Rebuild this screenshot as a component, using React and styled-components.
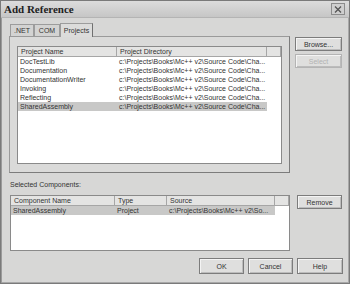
import React from "react"
import styled, { createGlobalStyle } from "styled-components"

const GlobalStyle = createGlobalStyle`
  html, body {
    margin: 0;
    padding: 0;
    background: #d6d6d6;
  }
  body {
    font-family: "Liberation Sans", Arial, sans-serif;
    -webkit-font-smoothing: antialiased;
  }
`

const Window = styled.div`
  width: 350px;
  height: 284px;
  box-sizing: border-box;
  background: #d7d7d6;
  border: 1px solid #7a7a7a;
  box-shadow: inset 1px 0 0 #9a9a9a, inset -1px -1px 0 #a8a8a8;
  display: flex;
  flex-direction: column;
  font-size: 7px;
  color: #333333;
`

const TitleBar = styled.div`
  height: 16px;
  display: flex;
  align-items: center;
  justify-content: space-between;
  padding: 0 4px 0 3px;
  background: linear-gradient(#dcdcdc, #c6c6c6);
  border-bottom: 1px solid #b4b4b4;
`

const Title = styled.span`
  font-family: "Liberation Serif", "Times New Roman", serif;
  font-weight: bold;
  font-size: 11px;
  color: #1e1e1e;
`

const CloseBox = styled.div`
  width: 12px;
  height: 10px;
  border: 1px solid #8c8c8c;
  background: #cfcfcf;
  display: flex;
  align-items: center;
  justify-content: center;
`

const Body = styled.div`
  flex: 1;
  display: flex;
  flex-direction: column;
  padding: 5px 6px 0 8px;
`

const TopRow = styled.div`
  display: flex;
  gap: 5px;
`

const TabArea = styled.div`
  width: 281px;
  display: flex;
  flex-direction: column;
`

const Tabs = styled.div`
  height: 13px;
  display: flex;
  align-items: flex-end;
  padding-left: 1px;
`

const Tab = styled.div`
  width: ${p => p.$w}px;
  height: ${p => (p.$active ? 14 : 12)}px;
  box-sizing: border-box;
  margin-bottom: ${p => (p.$active ? -1 : 0)}px;
  border: 1px solid #9c9c9c;
  border-bottom: none;
  border-right-color: ${p => (p.$active ? "#707070" : "#9c9c9c")};
  background: ${p => (p.$active ? "#dcdcdb" : "#d3d3d2")};
  display: flex;
  align-items: center;
  justify-content: center;
  z-index: ${p => (p.$active ? 1 : 0)};
`

const Panel = styled.div`
  height: 137px;
  box-sizing: border-box;
  border: 1px solid #9a9a9a;
  border-right-color: #7c7c7c;
  border-bottom-color: #7c7c7c;
  background: #dadad9;
  padding: 9px 7px 8px 7px;
  display: flex;
`

const SideButtons = styled.div`
  display: flex;
  flex-direction: column;
  gap: 3px;
  padding-top: 14px;
`

const Button = styled.button`
  width: ${p => p.$w}px;
  height: ${p => p.$h}px;
  box-sizing: border-box;
  padding: 0;
  font-family: "Liberation Sans", Arial, sans-serif;
  font-size: 7px;
  color: ${p => (p.disabled ? "#b2b2b2" : "#333333")};
  background: #dfdfde;
  border: 1px solid ${p => (p.disabled ? "#b4b4b4" : "#7c7c7c")};
  box-shadow: inset 1px 1px 0 #f4f4f4, inset -1px -1px 0 #bcbcbc;
`

const List = styled.div`
  width: ${p => (p.$w ? `${p.$w}px` : "auto")};
  flex: ${p => (p.$w ? "none" : 1)};
  height: ${p => (p.$h ? `${p.$h}px` : "auto")};
  box-sizing: border-box;
  border: 1px solid #8a8a8a;
  background: #ffffff;
  display: flex;
  flex-direction: column;
  overflow: hidden;
`

const HeaderRow = styled.div`
  display: flex;
  height: 10px;
`

const HeaderCell = styled.div`
  width: ${p => (p.$w ? `${p.$w}px` : "auto")};
  flex: ${p => (p.$w ? "none" : 1)};
  box-sizing: border-box;
  background: #e4e4e3;
  border-right: 1px solid #a6a6a6;
  border-bottom: 1px solid #a6a6a6;
  padding-left: 3px;
  line-height: 9px;
  white-space: nowrap;
  overflow: hidden;
`

const Row = styled.div`
  display: flex;
  height: 9px;
  line-height: 9px;
`

const Cell = styled.div`
  width: ${p => p.$w}px;
  box-sizing: border-box;
  padding-left: 2px;
  background: ${p => (p.$selected ? "#c8c8c7" : "transparent")};
  white-space: nowrap;
  overflow: hidden;
`

const Label = styled.div`
  margin-top: 7px;
  height: 10px;
  line-height: 10px;
  padding-left: 1px;
`

const BottomRow = styled.div`
  display: flex;
  gap: 7px;
  margin-top: 5px;
  padding-left: 1px;
`

const Footer = styled.div`
  display: flex;
  justify-content: flex-end;
  gap: 4px;
  margin-top: 7px;
`

const ListView = ({ columns, rows, selected, width, height }) => (
  <List $w={width} $h={height}>
    <HeaderRow>
      {columns.map(c => (
        <HeaderCell key={c.title} $w={c.width}>
          {c.title}
        </HeaderCell>
      ))}
      <HeaderCell />
    </HeaderRow>
    {rows.map((r, i) => (
      <Row key={i}>
        {r.map((v, j) => (
          <Cell key={j} $w={columns[j].width} $selected={i === selected}>
            {v}
          </Cell>
        ))}
      </Row>
    ))}
  </List>
)

const path = "c:\\Projects\\Books\\Mc++ v2\\Source Code\\Cha..."

const projectColumns = [
  { title: "Project Name", width: 99 },
  { title: "Project Directory", width: 150 },
]

const projects = [
  ["DocTestLib", path],
  ["Documentation", path],
  ["DocumentationWriter", path],
  ["Invoking", path],
  ["Reflecting", path],
  ["SharedAssembly", path],
]

const selectedColumns = [
  { title: "Component Name", width: 104 },
  { title: "Type", width: 52 },
  { title: "Source", width: 108 },
]

const selectedRows = [
  ["SharedAssembly", "Project", "c:\\Projects\\Books\\Mc++ v2\\So..."],
]

export default function App() {
  return (
    <>
      <GlobalStyle />
      <Window>
        <TitleBar>
          <Title>Add Reference</Title>
          <CloseBox>
            <svg width="8" height="7" viewBox="0 0 8 7">
              <path d="M1 0.5 L7 6.5 M7 0.5 L1 6.5" stroke="#555" strokeWidth="1.3" />
            </svg>
          </CloseBox>
        </TitleBar>
        <Body>
          <TopRow>
            <TabArea>
              <Tabs>
                <Tab $w={24}>.NET</Tab>
                <Tab $w={26}>COM</Tab>
                <Tab $w={33} $active>
                  Projects
                </Tab>
              </Tabs>
              <Panel>
                <ListView columns={projectColumns} rows={projects} selected={5} />
              </Panel>
            </TabArea>
            <SideButtons>
              <Button $w={47} $h={14}>Browse...</Button>
              <Button $w={47} $h={14} disabled>
                Select
              </Button>
            </SideButtons>
          </TopRow>
          <Label>Selected Components:</Label>
          <BottomRow>
            <ListView
              columns={selectedColumns}
              rows={selectedRows}
              selected={0}
              width={280}
              height={56}
            />
            <Button $w={45} $h={14}>Remove</Button>
          </BottomRow>
          <Footer>
            <Button $w={45} $h={16}>OK</Button>
            <Button $w={45} $h={16}>Cancel</Button>
            <Button $w={46} $h={16}>Help</Button>
          </Footer>
        </Body>
      </Window>
    </>
  )
}
